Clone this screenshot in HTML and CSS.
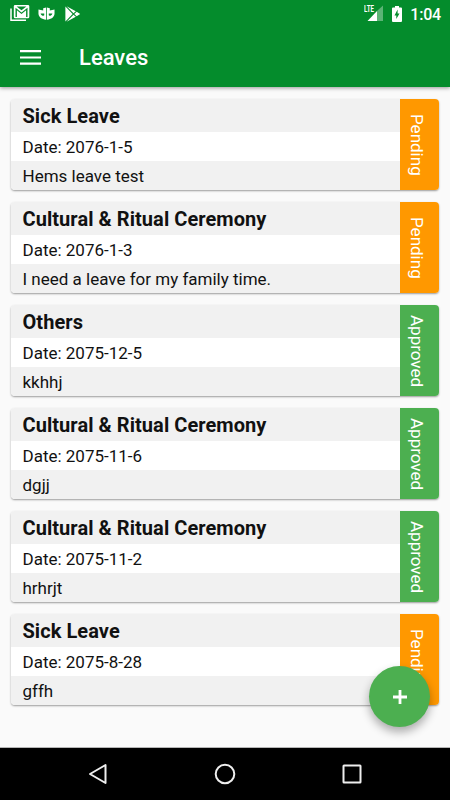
FILE: index.html
```html
<!DOCTYPE html>
<html lang="en">

<head>
    <meta charset="UTF-8">
    <meta name="viewport" content="width=device-width, initial-scale=1.0">
    <title>Leaves</title>
    <link rel="stylesheet" href="styles.css">
</head>

<body>
    <div class="screen">
        <header class="header">
            <div class="status-bar">
                <div class="status-left">
                    <svg class="icon-mail" width="20" height="17" viewBox="0 0 20 17">
                        <path d="M1 3.500v11.700h15" fill="none" stroke="#fff" stroke-width="1.500" />
                        <path fill="#fff" fill-rule="evenodd" d="M5 0h13q1.300 0 1.300 1.300V12q0 1.300-1.300 1.300H5Q3.800 13.300 3.800 12V1.300Q3.800 0 5 0zM5.500 2.800V11.900h1.400V5.200l4.600 3.900 4.600-3.900v6.700h1.400V2.800l-6 4.700zM6.600 1.500l4.900 3.800 4.900-3.800z" />
                    </svg>
                    <svg class="icon-mask" width="17" height="14" viewBox="0 0 18 14">
                        <path fill="#fff" fill-rule="evenodd" d="M.5 2.200l5 1.200V1L8.600 0v13C4 12.800.8 10.500.5 6.800zM2.800 6.600c.6 2.400 2.400 2.800 3.800 1.600V6.400z" />
                        <path fill="#fff" fill-rule="evenodd" d="M17.500 2.200l-5 1.200V1L9.400 0v13c4.600-.2 7.800-2.500 8.100-6.200zM11.400 6.400v1.800c1.400 1.200 3.200.8 3.800-1.600z" />
                    </svg>
                    <svg class="icon-play" width="16" height="16" viewBox="0 0 16 16">
                        <path fill="#fff" d="M.4.600v14.800L7.600 8z" />
                        <path fill="#fff" d="M1.600.2l9.200 5L8.500 7.200zM1.600 15.800l9.200-5-2.300-2zM11.700 5.800L15.200 8l-3.500 2.200L9.300 8z" />
                    </svg>
                </div>
                <div class="status-right">
                    <div class="signal">
                        <svg width="20" height="17" viewBox="0 0 20 17">
                            <path fill="#fff" fill-opacity=".35" d="M13 6L19 .5V16h-6z" />
                            <path fill="#fff" d="M3.500 16L13 6V16z" />
                        </svg>
                        <span class="lte">LTE</span>
                    </div>
                    <svg class="icon-battery" width="10" height="16" viewBox="0 0 10 16">
                        <path fill="#fff" d="M1 1.500h2V0h4v1.500h2q1 0 1 1V15q0 1-1 1H1q-1 0-1-1V2.500q0-1 1-1z" />
                        <path fill="#048c2c" d="M5.600 3.600v3.800h1.900L4.300 13V9.400H2.500z" />
                    </svg>
                    <span class="clock">1:04</span>
                </div>
            </div>
            <div class="app-bar">
                <svg class="icon-menu" width="21" height="15" viewBox="0 0 21 15">
                    <path d="M0 1.200h21M0 7.500h21M0 13.700h21" stroke="#fff" stroke-width="2.200" />
                </svg>
                <h1>Leaves</h1>
            </div>
        </header>

        <main class="leaves">
            <div class="leave">
                <div class="leave-info">
                    <h2>Sick Leave</h2>
                    <p class="date">Date: 2076-1-5</p>
                    <p class="reason">Hems leave test</p>
                </div>
                <div class="status pending"><span>Pending</span></div>
            </div>
            <div class="leave">
                <div class="leave-info">
                    <h2>Cultural &amp; Ritual Ceremony</h2>
                    <p class="date">Date: 2076-1-3</p>
                    <p class="reason">I need a leave for my family time.</p>
                </div>
                <div class="status pending"><span>Pending</span></div>
            </div>
            <div class="leave">
                <div class="leave-info">
                    <h2>Others</h2>
                    <p class="date">Date: 2075-12-5</p>
                    <p class="reason">kkhhj</p>
                </div>
                <div class="status approved"><span>Approved</span></div>
            </div>
            <div class="leave">
                <div class="leave-info">
                    <h2>Cultural &amp; Ritual Ceremony</h2>
                    <p class="date">Date: 2075-11-6</p>
                    <p class="reason">dgjj</p>
                </div>
                <div class="status approved"><span>Approved</span></div>
            </div>
            <div class="leave">
                <div class="leave-info">
                    <h2>Cultural &amp; Ritual Ceremony</h2>
                    <p class="date">Date: 2075-11-2</p>
                    <p class="reason">hrhrjt</p>
                </div>
                <div class="status approved"><span>Approved</span></div>
            </div>
            <div class="leave">
                <div class="leave-info">
                    <h2>Sick Leave</h2>
                    <p class="date">Date: 2075-8-28</p>
                    <p class="reason">gffh</p>
                </div>
                <div class="status pending"><span>Pending</span></div>
            </div>
        </main>

        <button class="add-button" aria-label="Add leave">
            <svg width="14" height="14" viewBox="0 0 14 14">
                <path d="M7 0v14M0 7h14" stroke="#fff" stroke-width="2.800" />
            </svg>
        </button>

        <nav class="nav-bar">
            <svg width="22" height="22" viewBox="0 0 22 22">
                <path d="M18.500 2v18L3 11z" />
            </svg>
            <svg width="22" height="22" viewBox="0 0 22 22">
                <circle cx="11" cy="11" r="9.300" />
            </svg>
            <svg width="22" height="22" viewBox="0 0 22 22">
                <rect x="2.500" y="2.500" width="17" height="17" rx="0.500" />
            </svg>
        </nav>
    </div>
</body>

</html>
```

FILE: styles.css
```css
* {
    box-sizing: border-box;
}

body {
    margin: 0;
    font-family: Roboto, "Liberation Sans", sans-serif;
    color: #111;
}

h1,
h2,
p {
    margin: 0;
}

svg {
    display: block;
    flex: none;
}

.screen {
    position: relative;
    display: flex;
    flex-direction: column;
    width: 450px;
    height: 800px;
    overflow: hidden;
    background: #fafafa;
}

.header {
    height: 87px;
    background: #048c2c;
    color: #fff;
    box-shadow: 0 1px 4px rgba(0, 0, 0, 0.4);
}

.status-bar {
    display: flex;
    justify-content: space-between;
    height: 27px;
    padding: 0 9px 0 10px;
}

.status-left,
.status-right {
    display: flex;
    align-items: center;
}

.icon-mask {
    margin-left: 8px;
}

.icon-play {
    margin-left: 10px;
}

.signal {
    position: relative;
    margin-right: 8px;
}

.lte {
    position: absolute;
    top: 0;
    left: 0;
    font-size: 9px;
    line-height: 8px;
    font-weight: bold;
    transform: scaleX(0.68);
    transform-origin: left;
}

.clock {
    margin-left: 8px;
    padding-top: 1px;
    font-size: 16px;
    font-weight: 500;
    letter-spacing: -0.2px;
}

.app-bar {
    display: flex;
    align-items: center;
    height: 60px;
    padding: 0 20px;
}

.app-bar h1 {
    margin-left: 38px;
    padding-top: 2px;
    font-size: 22px;
    line-height: 26px;
    font-weight: 500;
}

.leaves {
    display: flex;
    flex-direction: column;
    flex: 1;
    gap: 12px;
    padding: 12px 11px 0;
}

.leave {
    display: flex;
    height: 91px;
    border-radius: 4px;
    overflow: hidden;
    background: #fff;
    box-shadow: 0 1px 2px rgba(0, 0, 0, 0.38);
}

.leave-info {
    flex: 1;
}

.leave-info h2 {
    height: 33px;
    padding-left: 11.5px;
    background: #f1f1f1;
    font-size: 20px;
    line-height: 34px;
    letter-spacing: 0.06px;
}

.leave-info p {
    height: 29px;
    padding-left: 11.5px;
    font-size: 17px;
    line-height: 31px;
}

.leave-info .reason {
    background: #f1f1f1;
}

.status {
    display: flex;
    align-items: center;
    justify-content: center;
    width: 39px;
    padding: 1px 6px 0 0;
    color: #fff;
    font-size: 17px;
}

.status span {
    writing-mode: vertical-rl;
}

.pending {
    background: #ff9800;
}

.approved {
    background: #4caf50;
}

.add-button {
    position: absolute;
    left: 369px;
    top: 666px;
    display: flex;
    align-items: center;
    justify-content: center;
    width: 61px;
    height: 61px;
    padding: 0;
    border: 0;
    border-radius: 50%;
    background: #4caf50;
    box-shadow: 0 5px 10px rgba(0, 0, 0, 0.32);
}

.nav-bar {
    display: flex;
    align-items: center;
    justify-content: space-between;
    height: 53px;
    padding: 0 87px 0 87px;
    border-top: 1px solid #b5b5b5;
    background: #000;
}

.nav-bar svg {
    fill: none;
    stroke: #eee;
    stroke-width: 2;
    stroke-linejoin: round;
}
```
